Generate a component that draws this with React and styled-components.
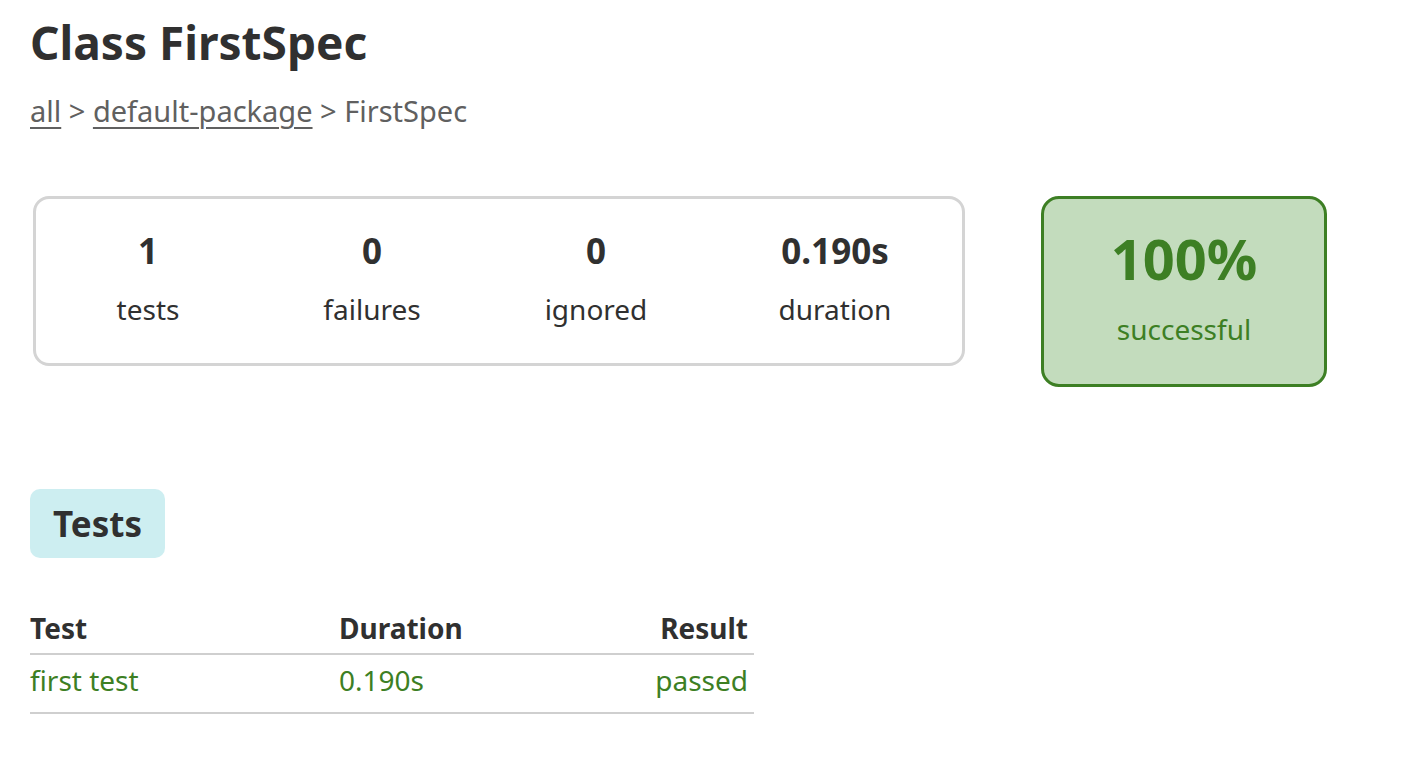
import React from 'react'
import styled, { createGlobalStyle } from 'styled-components';

const GlobalStyle = createGlobalStyle`
    html, body {
        margin:0;
        padding:0;
        background:#fff;
    }
    body {
        font-family:"Noto Sans", "Open Sans", sans-serif;
        color:#303030;
    }
`;

const counters = [
    { value: '1', label: 'tests', width: 224 },
    { value: '0', label: 'failures', width: 224 },
    { value: '0', label: 'ignored', width: 224 },
    { value: '0.190s', label: 'duration', width: 254 },
];

const tests = [
    { name: 'first test', duration: '0.190s', result: 'passed' },
];

const App = () => {
    return (
        <>
            <GlobalStyle />
            <Content>
                <Title>Class FirstSpec</Title>
                <Breadcrumbs>
                    <Crumb href="#">all</Crumb> &gt; <Crumb href="#">default-package</Crumb> &gt; FirstSpec
                </Breadcrumbs>
                <Summary>
                    <SummaryGroup>
                        {counters.map((item) => (
                            <InfoBox key={item.label} width={item.width}>
                                <Counter>{item.value}</Counter>
                                <CounterLabel>{item.label}</CounterLabel>
                            </InfoBox>
                        ))}
                    </SummaryGroup>
                    <SuccessRate>
                        <Percent>100%</Percent>
                        <PercentLabel>successful</PercentLabel>
                    </SuccessRate>
                </Summary>
                <Tabs>
                    <Tab>Tests</Tab>
                </Tabs>
                <Table>
                    <thead>
                        <tr>
                            <Th>Test</Th>
                            <Th>Duration</Th>
                            <Th align="right">Result</Th>
                        </tr>
                    </thead>
                    <tbody>
                        {tests.map((item) => (
                            <tr key={item.name}>
                                <Td>{item.name}</Td>
                                <Td>{item.duration}</Td>
                                <Td align="right">{item.result}</Td>
                            </tr>
                        ))}
                    </tbody>
                </Table>
            </Content>
        </>
    )
}

const Content = styled.div`
    padding:14px 30px 40px;
`;

const Title = styled.h1`
    margin:0;
    font-size:46px;
    line-height:56px;
    font-weight:700;
    color:#303030;
`;

const Breadcrumbs = styled.div`
    margin-top:23px;
    font-size:29px;
    line-height:36px;
    color:#606060;
`;

const Crumb = styled.a`
    color:#606060;
    text-decoration:underline;
    text-decoration-thickness:2px;
    text-underline-offset:5px;
`;

const Summary = styled.div`
    display:flex;
    align-items:flex-start;
    gap:76px;
    margin-top:67px;
    margin-left:3px;
`;

const SummaryGroup = styled.div`
    display:flex;
    border:3px solid #d4d4d4;
    border-radius:16px;
    height:164px;
    align-items:center;
`;

const InfoBox = styled.div`
    width:${(p) => p.width}px;
    text-align:center;
    margin-top:-4px;
`;

const Counter = styled.div`
    font-size:35px;
    line-height:40px;
    font-weight:700;
    color:#303030;
`;

const CounterLabel = styled.div`
    margin-top:20px;
    font-size:28px;
    line-height:36px;
    color:#303030;
`;

const SuccessRate = styled.div`
    width:280px;
    height:185px;
    display:flex;
    flex-direction:column;
    align-items:center;
    justify-content:center;
    background:#c3dcbd;
    border:3px solid #3d7f24;
    border-radius:18px;
    color:#3d7f24;
`;

const Percent = styled.div`
    font-size:56px;
    line-height:60px;
    font-weight:700;
    margin-top:-8px;
`;

const PercentLabel = styled.div`
    margin-top:23px;
    font-size:28px;
    line-height:36px;
`;

const Tabs = styled.div`
    display:flex;
    margin-top:102px;
`;

const Tab = styled.div`
    background:#cdeef1;
    border-radius:10px;
    padding:0 23px;
    height:69px;
    display:flex;
    align-items:center;
    font-size:35px;
    font-weight:700;
    color:#303030;
`;

const Table = styled.table`
    margin-top:52px;
    width:724px;
    border-collapse:collapse;
`;

const Th = styled.th`
    text-align:${(p) => p.align || 'left'};
    font-size:28px;
    line-height:36px;
    font-weight:700;
    color:#303030;
    padding:0 ${(p) => (p.align === 'right' ? '6px' : '0')} 7px 0;
    border-bottom:2px solid #cfcfcf;
    &:first-child { width:309px; }
`;

const Td = styled.td`
    text-align:${(p) => p.align || 'left'};
    font-size:28px;
    line-height:36px;
    color:#3d7f24;
    padding:7px ${(p) => (p.align === 'right' ? '6px' : '0')} 14px 0;
    border-bottom:2px solid #cfcfcf;
`;

export default App
